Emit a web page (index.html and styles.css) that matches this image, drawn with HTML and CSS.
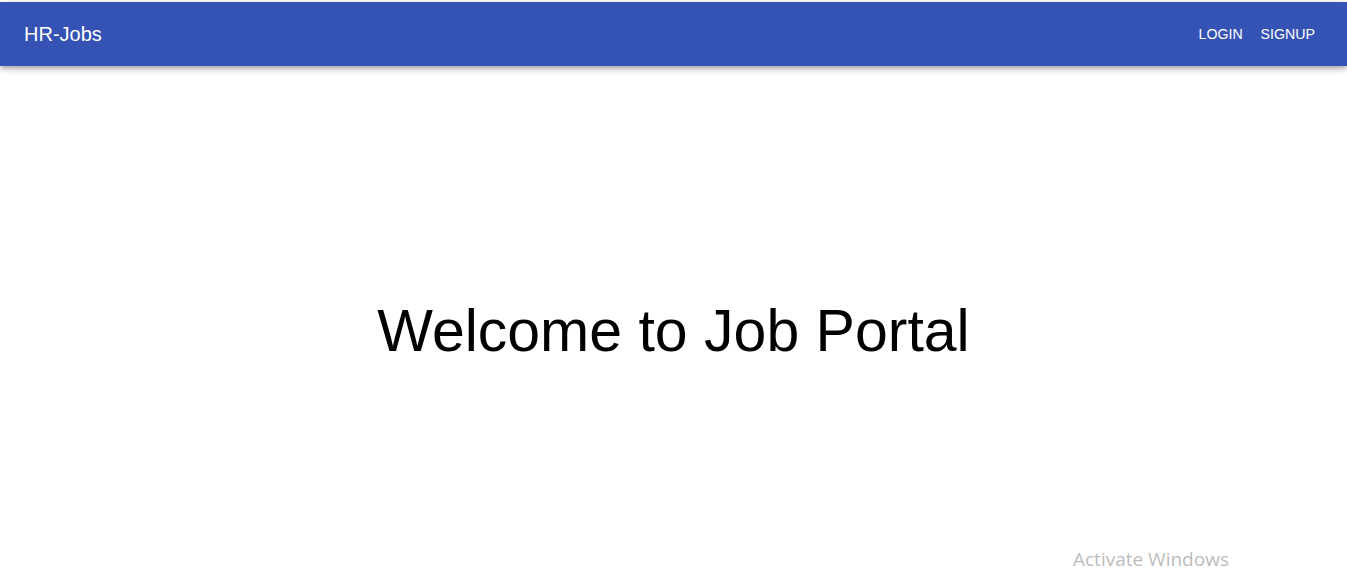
FILE: index.html
```html
<!DOCTYPE html>
<html>
<head>
<meta charset="utf-8">
<link rel="stylesheet" href="styles.css">
</head>
<body>
<header class="appbar">
  <div class="brand">HR-Jobs</div>
  <nav class="nav">
    <a class="btn btn-login">Login</a>
    <a class="btn">Signup</a>
  </nav>
</header>
<main class="main">
  <h1 class="welcome">Welcome to Job Portal</h1>
</main>
<div class="watermark">Activate Windows</div>
</body>
</html>
```
FILE: styles.css
```css
html, body {
  margin: 0;
  padding: 0;
  background: #fff;
  height: 100%;
  overflow: hidden;
}
body {
  font-family: "Liberation Sans", Arial, sans-serif;
  padding-top: 2px;
  box-sizing: border-box;
}
.appbar {
  height: 64px;
  background: #3552b5;
  color: #fff;
  display: flex;
  align-items: center;
  justify-content: space-between;
  padding: 0 24px;
  box-shadow: 0 2px 4px -1px rgba(0,0,0,0.2), 0 4px 5px 0 rgba(0,0,0,0.14), 0 1px 10px 0 rgba(0,0,0,0.12);
  position: relative;
  z-index: 1;
}
.brand {
  font-size: 20px;
  font-weight: 400;
}
.nav {
  display: flex;
  align-items: center;
}
.btn {
  min-width: 64px;
  box-sizing: border-box;
  padding: 6px 8px;
  font-size: 14.2px;
  text-transform: uppercase;
  text-align: center;
  line-height: 1.75;
  color: #fff;
}
.main {
  display: flex;
  justify-content: center;
  padding-top: 230px;
}
.welcome {
  margin: 0;
  font-size: 59px;
  font-weight: 400;
  color: #000;
  line-height: 1.2;
}
.watermark {
  position: absolute;
  left: 1073px;
  top: 549px;
  font-family: "Open Sans", "Noto Sans", sans-serif;
  font-size: 19px;
  line-height: 1.1;
  color: #bcbcbc;
  font-weight: 400;
}
```
